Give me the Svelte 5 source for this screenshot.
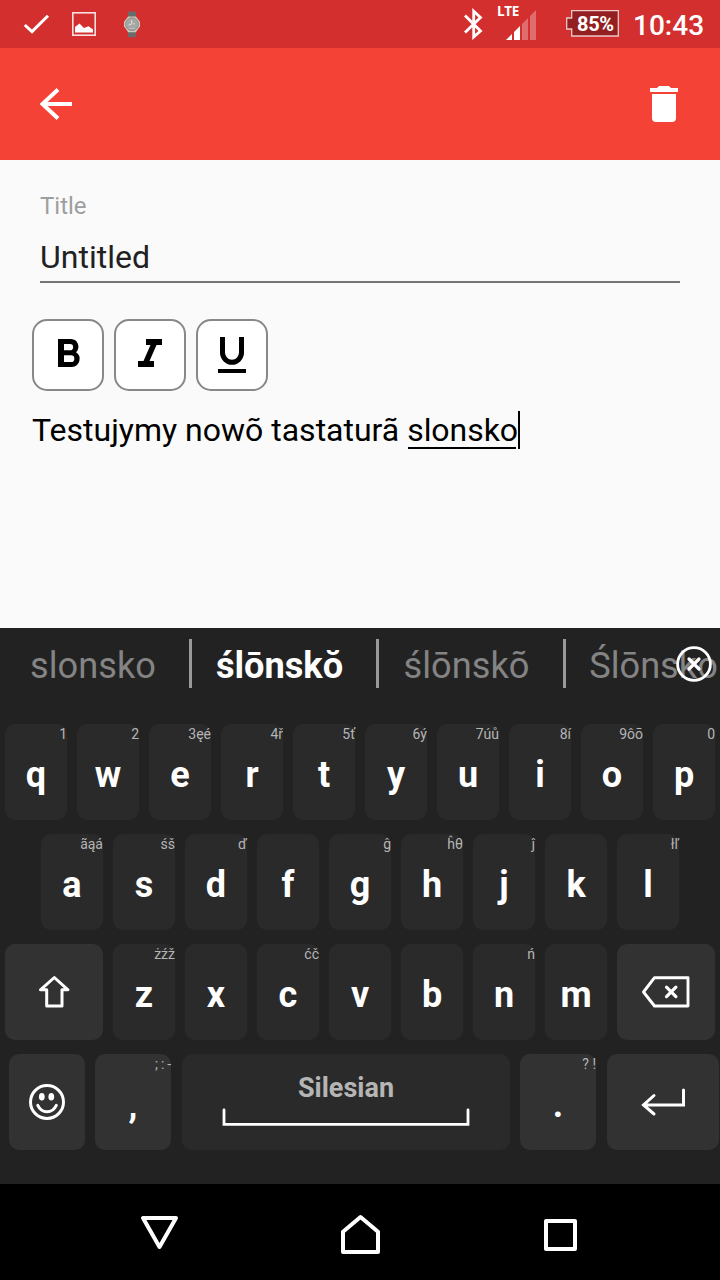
<script>
  const rows = [
    [['q', '1'], ['w', '2'], ['e', '3ęé'], ['r', '4ř'], ['t', '5ť'], ['y', '6ý'], ['u', '7úů'], ['i', '8í'], ['o', '9ôō'], ['p', '0']],
    [['a', 'ãąá'], ['s', 'śš'], ['d', 'ď'], ['f', ''], ['g', 'ĝ'], ['h', 'ĥθ'], ['j', 'ĵ'], ['k', ''], ['l', 'łľ']],
    [['z', 'żźž'], ['x', ''], ['c', 'ćč'], ['v', ''], ['b', ''], ['n', 'ń'], ['m', '']]
  ];
  const suggestions = ['slonsko', 'ślōnskŏ', 'ślōnskõ', 'Ślōnsko'];
</script>

{#snippet letter(k)}
  <div class="key"><span class="hint">{k[1]}</span><span class="main">{k[0]}</span></div>
{/snippet}

<div class="screen">
  <header class="status">
    <svg class="left" width="160" height="48" viewBox="0 0 160 48">
      <path d="M24.8 25 L32 31.6 L48 15.7" fill="none" stroke="#fff" stroke-width="3" />
      <rect x="72.8" y="12.8" width="22.4" height="22.4" fill="none" stroke="#fff" stroke-opacity=".85" stroke-width="1.6" />
      <path d="M75 32.5 V27 L79.5 23.5 L84 28 L88.5 26.3 L93 29.5 V32.5 Z" fill="#fff" />
      <path d="M128 12.2q0-.7.7-.7h6.6q.7 0 .7.7v6h-8zM128 30h8v6.3q0 .9-.9.9h-6.2q-.9 0-.9-.9z" fill="#6b6b6b" />
      <path d="M128.2 16.5h7.6l4.2 5.2v4.6l-4.2 6h-7.6l-4.2-6v-4.6z" fill="#cfccb8" />
      <circle cx="132" cy="24.2" r="6.4" fill="#a6a8a8" stroke="#8b8c8a" />
      <path d="M131.7 20v4l-3 1M134 23v1.5" stroke="#e2e2e2" fill="none" />
      <path d="M129 28.4h6" stroke="#bbb" />
    </svg>
    <div class="right">
      <svg width="20" height="32" viewBox="463 8 20 32"><path d="M465 15.5 L480.5 31 L473.7 37 V11.2 L480.5 17.5 L465 32.5" fill="none" stroke="#fff" stroke-width="2.8" /></svg>
      <div class="signal">
        <span>LTE</span>
        <svg width="30" height="30" viewBox="506 10 30 30">
          <path d="M506 40 L512 34 V40zM514 32 L520 26 V40H514z" fill="#fff" />
          <path d="M522 24 L528 18 V40H522zM530 16 L536 10 V40H530z" fill="#fff" fill-opacity=".3" />
        </svg>
      </div>
      <div class="battery">
        <svg width="54" height="28" viewBox="566 10 54 28"><path d="M571.7 10.7H618.3V36H571.7V29H566.7V18H571.7z" fill="#931f20" stroke="#fff" stroke-opacity=".75" stroke-width="1.3" /></svg>
        <span>85%</span>
      </div>
      <time>10:43</time>
    </div>
  </header>

  <div class="appbar">
    <svg width="34" height="34" viewBox="39 87 34 34"><path d="M72 104H43M58 89.5L42.5 104L58 118.5" fill="none" stroke="#fff" stroke-width="4" /></svg>
    <svg width="28" height="36" viewBox="650 86 28 36"><path d="M650 88h7l2-2h10l2 2h7v4h-28zM652 94h24v24a4 4 0 0 1-4 4h-16a4 4 0 0 1-4-4z" fill="#fff" /></svg>
  </div>

  <main>
    <div class="field">
      <div class="label">Title</div>
      <div class="value">Untitled</div>
    </div>
    <div class="tools">
      <button aria-label="Bold"><svg width="72" height="72" viewBox="32 319 72 72"><path fill-rule="evenodd" d="M58 339H71a7.7 7.7 0 0 1 5 13.3A8 8 0 0 1 72 367H58zM64 344V350.3H70a3.15 3.15 0 0 0 0-6.3zM64 355.3V362H71a3.35 3.35 0 0 0 0-6.7z" /></svg></button>
      <button aria-label="Italic"><svg width="72" height="72" viewBox="114 319 72 72"><path d="M146 339H162V345H156.5L149.5 361H154V367H138V361H143.5L150.5 345H146z" /></svg></button>
      <button aria-label="Underline"><svg width="72" height="72" viewBox="196 319 72 72"><path d="M222.5 337V352.5a9.5 9.8 0 0 0 19 0V337" fill="none" stroke="#000" stroke-width="5" /><path d="M218 369h28v4h-28z" /></svg></button>
    </div>
    <p>Testujymy nowõ tastaturã <span class="composing">slonsko</span><i class="caret"></i></p>
  </main>

  <section class="keyboard">
    <div class="suggest">
      {#each suggestions as s, i}
        <div class="word" class:strong={i === 1}>{s}</div>
      {/each}
      <svg class="close" width="38" height="38" viewBox="675 645 38 38"><circle cx="694" cy="664" r="16.4" fill="none" stroke="#fff" stroke-width="2.8" /><path d="M689 659l10 10M699 659l-10 10" stroke="#fff" stroke-width="3.2" stroke-linecap="round" /></svg>
    </div>

    <div class="row">{#each rows[0] as k}{@render letter(k)}{/each}</div>
    <div class="row">{#each rows[1] as k}{@render letter(k)}{/each}</div>
    <div class="row">
      <div class="key fn wide"><svg width="98" height="96" viewBox="5 944 98 96"><path d="M54.3 977.5L68 989.8H62V1006H46.7V989.8H40.5z" fill="none" stroke="#fff" stroke-width="3" stroke-linejoin="round" /></svg></div>
      {#each rows[2] as k}{@render letter(k)}{/each}
      <div class="key fn wide"><svg width="98" height="96" viewBox="617 944 98 96"><path d="M643.5 992L654.5 977.7H688V1006H654.5z" fill="none" stroke="#fff" stroke-width="2.9" stroke-linejoin="round" /><path d="M666.5 987.2l9.4 9.4M675.9 987.2l-9.4 9.4" stroke="#fff" stroke-width="3.2" stroke-linecap="round" /></svg></div>
    </div>
    <div class="row bottom">
      <div class="key fn"><svg width="76" height="96" viewBox="9 1054 76 96"><circle cx="47" cy="1102" r="16.5" fill="none" stroke="#fff" stroke-width="3" /><ellipse cx="41.8" cy="1096.8" rx="2.9" ry="3.8" fill="#fff" /><ellipse cx="51.3" cy="1096.8" rx="2.9" ry="3.8" fill="#fff" /><path d="M37.8 1105.3c4 8.6 14.4 8.6 18.5 0" fill="none" stroke="#fff" stroke-width="3" stroke-linecap="round" /></svg></div>
      <div class="key fn"><span class="hint tight">; : -</span><span class="main">,</span></div>
      <div class="key space"><span>Silesian</span><svg width="248" height="20" viewBox="222 1107 248 20"><path d="M224 1110V1124.3H468V1110" fill="none" stroke="#fff" stroke-width="2.8" stroke-linecap="round" /></svg></div>
      <div class="key fn dot"><span class="hint">? !</span><span class="main">.</span></div>
      <div class="key fn enter"><svg width="112" height="96" viewBox="607 1054 112 96"><path d="M683.5 1090V1105H643.5M654 1095.5L643.5 1105L654 1114" fill="none" stroke="#fff" stroke-width="3" stroke-linecap="round" /></svg></div>
    </div>
  </section>

  <nav>
    <svg width="40" height="40" viewBox="140 1214 40 40"><path d="M143 1218H176L159.5 1247z" fill="none" stroke="#fff" stroke-width="4" stroke-linejoin="round" /></svg>
    <svg width="42" height="42" viewBox="340 1213 42 42"><path d="M343 1252V1231.7L360.5 1217L378 1231.7V1252z" fill="none" stroke="#fff" stroke-width="4" stroke-linejoin="round" /></svg>
    <svg width="36" height="36" viewBox="542 1216 36 36"><rect x="546" y="1221" width="29" height="28" fill="none" stroke="#fff" stroke-width="4" stroke-linejoin="round" /></svg>
  </nav>
</div>

<style>
  :global(body) { margin: 0; }
  .screen { width: 720px; height: 1280px; display: flex; flex-direction: column; font-family: Roboto, sans-serif; background: #fafafa; overflow: hidden; }
  svg { display: block; flex: none; }
  .status { height: 48px; background: #d32f2f; display: flex; justify-content: space-between; color: #fff; }
  .right { display: flex; padding: 8px 16px 0 0; }
  .signal { width: 39px; margin-left: 14px; height: 32px; position: relative; }
  .signal svg { margin: 2px 0 0 9px; }
  .signal span { position: absolute; left: 0; top: -5px; font: 700 13.5px/16px "Open Sans", sans-serif; letter-spacing: -.3px; }
  .battery { position: relative; margin: 2px 0 0 30px; width: 54px; height: 28px; }
  .battery span { position: absolute; left: 11px; top: 0; font: 700 20px/28px Roboto, sans-serif; letter-spacing: -.3px; }
  time { margin-left: 13px; width: 71px; font: 500 28px/36px Roboto, sans-serif; white-space: nowrap; }
  .appbar { height: 112px; background: #f44336; display: flex; align-items: center; justify-content: space-between; padding: 0 42px 0 39px; box-sizing: border-box; }
  main { height: 468px; box-sizing: border-box; padding: 30px 40px 0 32px; }
  .field { margin-left: 8px; border-bottom: 2px solid #757575; height: 91px; }
  .label { font-size: 24px; line-height: 32px; color: #9e9e9e; }
  .value { font-size: 32px; line-height: 40px; color: #212121; margin-top: 15px; }
  .tools { display: flex; gap: 10px; margin-top: 36px; }
  button { width: 72px; height: 72px; padding: 0; border: 2px solid #888; border-radius: 15px; background: #fff; overflow: hidden; }
  button svg { margin: -2px; }
  p { margin: 20px 0 0; font-size: 32px; line-height: 38px; color: #000; display: flex; white-space: pre; }
  .composing { height: 38px; letter-spacing: -.05px; background: linear-gradient(#000, #000) 1px 36px / 108px 2px no-repeat; }
  .caret { width: 2px; height: 38px; background: #000; }
  .keyboard { height: 556px; background: #222; flex: none; overflow: hidden; }
  .suggest { height: 96px; display: flex; position: relative; overflow: hidden; }
  .word { width: 187px; flex: none; box-sizing: border-box; height: 49px; margin-top: 11px; padding-right: 9px; font-size: 36.2px; line-height: 53px; text-align: center; color: #848484; position: relative; }
  .word:first-child { width: 189px; padding-right: 3px; }
  .word + .word { border-left: 3px solid #999; }
  .word.strong { color: #fff; font-weight: 700; }
  .close { position: absolute; left: 675px; top: 17px; }
  .row { display: flex; justify-content: center; gap: 10px; margin-bottom: 14px; }
  .key { width: 62px; height: 96px; border-radius: 10px; background: #2a2a2a; position: relative; flex: none; text-align: center; color: #fff; }
  .main { display: block; font-size: 36px; line-height: 42px; font-weight: 700; padding-top: 30px; }
  .hint { position: absolute; right: 0; top: 2px; font-size: 14px; line-height: 16px; color: #b5b5b5; white-space: pre; }
  .tight { letter-spacing: -.25px; }
  .fn { background: #323232; }
  .wide { width: 98px; }
  .bottom { justify-content: flex-start; padding-left: 9px; }
  .bottom .fn { width: 76px; }
  .space { width: 328px; margin-left: 1px; display: flex; flex-direction: column; align-items: center; }
  .space span { font-size: 27px; line-height: 32px; font-weight: 700; color: #b5b5b5; margin-top: 18px; }
  .space svg { margin-top: 3px; }
  .bottom .enter { width: 112px; margin-left: 1px; }
  nav { height: 96px; background: #000; display: flex; justify-content: space-between; align-items: center; padding: 4px 142px 0 140px; box-sizing: border-box; }
</style>
